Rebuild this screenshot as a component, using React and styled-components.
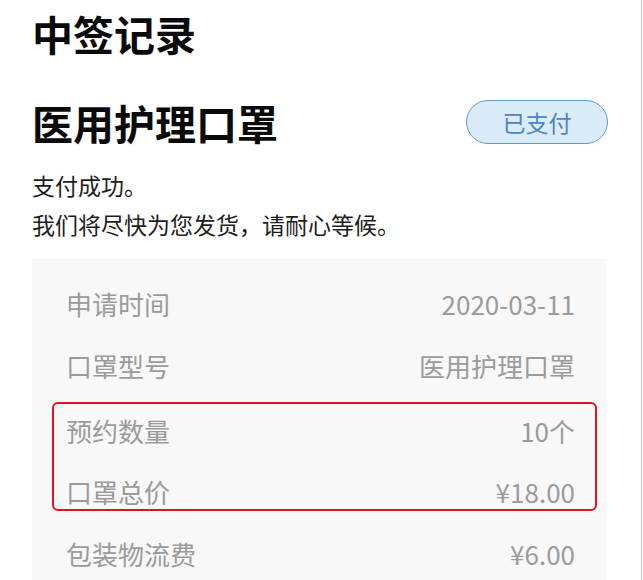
import styled, { createGlobalStyle } from "styled-components";

const GlobalStyle = createGlobalStyle`
  html, body {
    margin: 0;
    padding: 0;
    background: #ffffff;
  }
  body {
    font-family: "Noto Sans CJK SC", "Noto Sans", sans-serif;
  }
`;

const Page = styled.div`
  width: 642px;
  height: 580px;
  box-sizing: border-box;
  border-right: 1px solid #c9c9c9;
  padding: 5px 34px 0 32px;
  overflow: hidden;
`;

const Title = styled.h1`
  margin: 0;
  font-size: 41px;
  font-weight: 700;
  line-height: 56px;
  color: #0a0a0a;
`;

const ProductRow = styled.div`
  display: flex;
  justify-content: space-between;
  align-items: center;
  height: 56px;
  margin-top: 33px;
`;

const ProductName = styled.h2`
  margin: 0;
  font-size: 41px;
  font-weight: 700;
  color: #0a0a0a;
`;

const Badge = styled.div`
  width: 142px;
  height: 44px;
  margin-right: -1px;
  box-sizing: border-box;
  display: flex;
  align-items: center;
  justify-content: center;
  border: 1.5px solid #5e9bd3;
  border-radius: 22px;
  background: #dcebfa;
  color: #4a86c2;
  font-size: 23px;
`;

const Message = styled.div`
  margin-top: 16px;
  font-size: 23px;
  line-height: 39px;
  color: #1e1e1e;
`;

const Card = styled.div`
  margin-top: 15px;
  background: #f8f8f8;
  padding: 13px 32px 0 34px;
`;

const Row = styled.div`
  box-sizing: border-box;
  display: flex;
  justify-content: space-between;
  align-items: center;
  height: ${(p) => p.$h || 62}px;
  padding-top: ${(p) => p.$pt || 0}px;
  font-size: 26px;
  color: #9b9b9b;
`;

const Highlight = styled.div`
  margin: 6px -22px 11px -14px;
  padding: 0 20px 0 12px;
  border: 2px solid #e0141c;
  border-radius: 6px;
`;

const Label = styled.span``;
const Value = styled.span``;

const rows = [
  ["申请时间", "2020-03-11"],
  ["口罩型号", "医用护理口罩"],
];

export default function App() {
  return (
    <Page>
      <GlobalStyle />
      <Title>中签记录</Title>
      <ProductRow>
        <ProductName>医用护理口罩</ProductName>
        <Badge>已支付</Badge>
      </ProductRow>
      <Message>
        支付成功。
        <br />
        我们将尽快为您发货，请耐心等候。
      </Message>
      <Card>
        {rows.map(([label, value]) => (
          <Row key={label}>
            <Label>{label}</Label>
            <Value>{value}</Value>
          </Row>
        ))}
        <Highlight>
          <Row $h={52}>
            <Label>预约数量</Label>
            <Value>10个</Value>
          </Row>
          <Row $h={53} $pt={17}>
            <Label>口罩总价</Label>
            <Value>¥18.00</Value>
          </Row>
        </Highlight>
        <Row>
          <Label>包装物流费</Label>
          <Value>¥6.00</Value>
        </Row>
      </Card>
    </Page>
  );
}
